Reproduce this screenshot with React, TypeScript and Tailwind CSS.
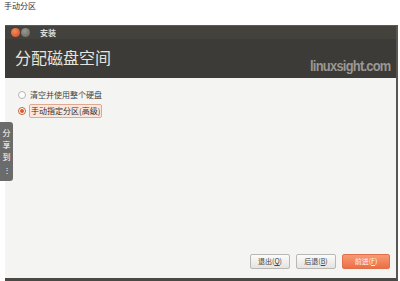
import React from "react";

export default function App() {
  return (
    <div className="w-[400px] h-[281px] bg-white relative overflow-hidden" style={{ fontFamily: '"Noto Sans CJK SC", "Noto Sans", sans-serif' }}>
      <div className="h-[25px] pl-[4px] pt-0 text-[8px] leading-[11px] text-[#333]">手动分区</div>
      <div className="ml-[5px] w-[393px] h-[256px] flex flex-col border-r-[2px] border-r-[#5a5753] border-b-[3px] border-b-[#4a4844]">
        <div className="h-[14px] bg-[#44423d] flex items-center pl-[6px] gap-[1px] border-t border-[#5c5a55]">
          <div className="w-[9px] h-[9px] rounded-full bg-[radial-gradient(circle_at_40%_35%,#f48a5c,#d9471c)]" />
          <div className="w-[9px] h-[9px] rounded-full bg-[radial-gradient(circle_at_40%_35%,#9a9893,#65635e)]" />
          <span className="ml-[9px] text-[8px] font-bold text-[#dcdad5] leading-none">安装</span>
        </div>
        <div className="h-[39px] bg-[#3c3b37] flex items-center justify-between pl-[10px] pr-[5px]">
          <span className="text-[16px] text-[#e6e4df] leading-none mt-[-4px]">分配磁盘空间</span>
          <span className="text-[14px] font-bold text-[#9a9894] leading-none mt-[14px] tracking-[-0.8px] scale-x-[0.92] origin-right" style={{ fontFamily: '"Liberation Sans Narrow", "Liberation Sans", sans-serif' }}>linuxsight.com</span>
        </div>
        <div className="flex-1 bg-[#f4f4f3] flex flex-col pl-[13px] pt-[10px] relative">
          <div className="flex items-center gap-[4px] h-[14px]">
            <div className="w-[8px] h-[8px] rounded-full border border-[#b8b6b2] bg-white" />
            <span className="text-[8px] text-[#444] leading-none">清空并使用整个硬盘</span>
          </div>
          <div className="flex items-center gap-[3px] h-[16px] mt-[1px]">
            <div className="w-[8px] h-[8px] rounded-full border border-[#c8603a] bg-white flex items-center justify-center">
              <div className="w-[4px] h-[4px] rounded-full bg-[#d8592c]" />
            </div>
            <span className="text-[8px] text-[#333] leading-none px-[1px] py-[2px] border border-[#e0a890] bg-[#fbe6dc] rounded-[2px]">手动指定分区(高级)</span>
          </div>
          <div className="flex-1" />
          <div className="flex justify-end gap-[6px] pr-[6px] pb-[9px]">
            <button className="w-[40px] h-[15px] text-[7px] text-[#444] border border-[#b9b7b3] rounded-[2px] bg-gradient-to-b from-[#fbfbfa] to-[#e4e3e0]">退出(<span className="underline">Q</span>)</button>
            <button className="w-[40px] h-[15px] text-[7px] text-[#444] border border-[#b9b7b3] rounded-[2px] bg-gradient-to-b from-[#fbfbfa] to-[#e4e3e0]">后退(<span className="underline">B</span>)</button>
            <button className="w-[48px] h-[15px] text-[7px] text-[#fff3ea] border border-[#e0704a] rounded-[2px] bg-gradient-to-b from-[#f79a74] to-[#ec6e44]">前进(<span className="underline">F</span>)</button>
          </div>
        </div>
      </div>
      <div className="absolute left-0 top-[122px] w-[13px] h-[59px] bg-[#6b6b6b] rounded-r-[3px] flex flex-col items-center pt-[5px] text-[8px] leading-[12px] text-white">
        <span>分</span>
        <span>享</span>
        <span>到</span>
        <span className="leading-[14px]">⋮</span>
      </div>
    </div>
  );
}
